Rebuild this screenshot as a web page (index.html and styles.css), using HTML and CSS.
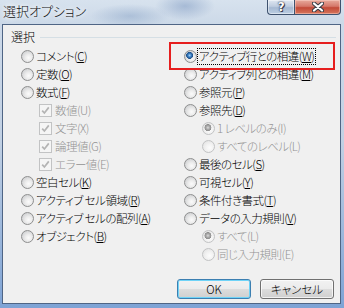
FILE: index.html
```html
<!DOCTYPE html>
<html lang="ja">
  <head>
    <meta charset="UTF-8" />
    <title>選択オプション</title>
    <link rel="stylesheet" href="styles.css">
  </head>
  <body>
    <div class="window">
      <!-- タイトルバー -->
      <div class="titlebar">
        <span class="title">選択オプション</span>
        <div class="caption">
          <span class="cap help">?</span>
          <span class="cap close">
            <svg width="12" height="10" viewBox="0 0 12 10">
              <path d="M2 1.5 L10 8.5 M10 1.5 L2 8.5" stroke="#3a3f48" stroke-width="4.2" stroke-linecap="round" fill="none"/>
              <path d="M2 1.5 L10 8.5 M10 1.5 L2 8.5" stroke="#fff" stroke-width="2.2" stroke-linecap="round" fill="none"/>
            </svg>
          </span>
        </div>
      </div>

      <div class="client">
        <div class="group">
          <div class="group-title"><span>選択</span></div>
          <div class="columns">
            <div class="col">
              <div class="row"><span class="radio"></span><span class="label">コメント(<u>C</u>)</span></div>
              <div class="row"><span class="radio"></span><span class="label">定数(<u>O</u>)</span></div>
              <div class="row"><span class="radio"></span><span class="label">数式(<u>F</u>)</span></div>
              <div class="row sub off"><span class="check"><svg width="11" height="11" viewBox="0 0 11 11"><path d="M2.2 5.6 L4.4 8 L8.8 2.4" stroke="#b4b4b4" stroke-width="1.7" fill="none"/></svg></span><span class="label">数値(U)</span></div>
              <div class="row sub off"><span class="check"><svg width="11" height="11" viewBox="0 0 11 11"><path d="M2.2 5.6 L4.4 8 L8.8 2.4" stroke="#b4b4b4" stroke-width="1.7" fill="none"/></svg></span><span class="label">文字(X)</span></div>
              <div class="row sub off"><span class="check"><svg width="11" height="11" viewBox="0 0 11 11"><path d="M2.2 5.6 L4.4 8 L8.8 2.4" stroke="#b4b4b4" stroke-width="1.7" fill="none"/></svg></span><span class="label">論理値(G)</span></div>
              <div class="row sub off"><span class="check"><svg width="11" height="11" viewBox="0 0 11 11"><path d="M2.2 5.6 L4.4 8 L8.8 2.4" stroke="#b4b4b4" stroke-width="1.7" fill="none"/></svg></span><span class="label">エラー値(E)</span></div>
              <div class="row"><span class="radio"></span><span class="label">空白セル(<u>K</u>)</span></div>
              <div class="row"><span class="radio"></span><span class="label">アクティブ セル領域(<u>R</u>)</span></div>
              <div class="row"><span class="radio"></span><span class="label">アクティブ セルの配列(<u>A</u>)</span></div>
              <div class="row"><span class="radio"></span><span class="label">オブジェクト(<u>B</u>)</span></div>
            </div>
            <div class="col">
              <div class="row marked"><span class="radio on"></span><span class="label focus">アクティブ行との相違(<u>W</u>)</span></div>
              <div class="row"><span class="radio"></span><span class="label">アクティブ列との相違(<u>M</u>)</span></div>
              <div class="row"><span class="radio"></span><span class="label">参照元(<u>P</u>)</span></div>
              <div class="row"><span class="radio"></span><span class="label">参照先(<u>D</u>)</span></div>
              <div class="row sub off"><span class="radio on"></span><span class="label">1 レベルのみ(I)</span></div>
              <div class="row sub off"><span class="radio"></span><span class="label">すべてのレベル(L)</span></div>
              <div class="row"><span class="radio"></span><span class="label">最後のセル(<u>S</u>)</span></div>
              <div class="row"><span class="radio"></span><span class="label">可視セル(<u>Y</u>)</span></div>
              <div class="row"><span class="radio"></span><span class="label">条件付き書式(<u>T</u>)</span></div>
              <div class="row"><span class="radio"></span><span class="label">データの入力規則(<u>V</u>)</span></div>
              <div class="row sub off"><span class="radio on"></span><span class="label">すべて(L)</span></div>
              <div class="row sub off"><span class="radio"></span><span class="label">同じ入力規則(E)</span></div>
            </div>
          </div>
        </div>

        <div class="actions">
          <button class="btn default">OK</button>
          <button class="btn">キャンセル</button>
        </div>
      </div>
    </div>
  </body>
</html>
```

FILE: styles.css
```css
* {
  box-sizing: border-box;
}

body {
  margin: 0;
  width: 344px;
  height: 308px;
  overflow: hidden;
  font-family: "Noto Sans CJK JP", sans-serif;
  font-size: 11.5px;
  font-weight: 300;
  letter-spacing: -0.5px;
  font-feature-settings: "palt";
  color: #000;
}

.window {
  display: flex;
  flex-direction: column;
  height: 308px;
  background: linear-gradient(to bottom, #cfdbea 0, #c2d1e4 45%, #7ea3d5 100%);
}

/* タイトルバー */
.titlebar {
  height: 24px;
  flex: none;
  display: flex;
  justify-content: space-between;
  align-items: flex-start;
  padding: 0 3px 0 3px;
  background:
    radial-gradient(ellipse 40px 12px at 130px 16px, rgba(120, 150, 190, 0.4), transparent),
    radial-gradient(ellipse 30px 14px at 185px 6px, rgba(110, 140, 185, 0.45), transparent),
    linear-gradient(to bottom, #d7e2ee, #ccd9e8);
}

.title {
  font-size: 13px;
  letter-spacing: 0;
  line-height: 17px;
  padding-top: 2px;
  color: #111;
  text-shadow: 0 0 4px #fff, 0 0 6px #fff;
}

.caption {
  display: flex;
}

.cap {
  height: 15px;
  display: flex;
  align-items: center;
  justify-content: center;
  border: 1px solid #3e526f;
  border-top: none;
}

.help {
  width: 27px;
  border-radius: 0 0 0 4px;
  border-right: none;
  color: #fff;
  font-family: "DejaVu Sans", sans-serif;
  font-weight: bold;
  font-size: 12px;
  line-height: 12px;
  text-shadow: 0 0 1px #223, 0 0 2px #334, 1px 1px 0 #445;
  background: linear-gradient(to bottom, #dfe7f1 0, #bfcde0 45%, #a6b9d2 55%, #bccee3 100%);
  box-shadow: inset 0 0 0 1px rgba(255, 255, 255, 0.45);
}

.close {
  width: 47px;
  border-radius: 0 0 4px 0;
  background: linear-gradient(to bottom, #e7aa9c 0, #d5786a 45%, #c24a38 55%, #d6765c 100%);
  box-shadow: inset 0 0 0 1px rgba(255, 220, 210, 0.45);
}

/* クライアント領域 */
.client {
  flex: 1;
  margin: 0 3px 4px 2px;
  border: 1px solid #4f6585;
  background: #f0f0f0;
  display: flex;
  flex-direction: column;
}

.group {
  margin: 5px 4px 0 5px;
  padding-bottom: 7px;
}

.group-title {
  display: flex;
  align-items: center;
  height: 14px;
  line-height: 14px;
  font-size: 12px;
  letter-spacing: 0;
  padding-left: 3px;
  margin-bottom: 3px;
}

.group-title::after {
  content: "";
  flex: 1;
  margin-left: 5px;
  border-top: 1px solid #d5dfe5;
}

.columns {
  display: grid;
  grid-template-columns: 163px 1fr;
  padding-left: 13px;
}

.col {
  display: flex;
  flex-direction: column;
}

.row {
  height: 18px;
  display: flex;
  align-items: center;
  white-space: nowrap;
}

.row.sub {
  padding-left: 18px;
}

.label {
  padding: 0 1px;
  line-height: 15px;
}

.off .label {
  color: #939393;
}

.focus {
  outline: 1px dotted #000;
}

.marked {
  position: relative;
}

.marked::after {
  content: "";
  position: absolute;
  left: -15px;
  top: -5px;
  width: 162px;
  height: 24px;
  border: 2px solid #e61e1e;
}

/* ラジオボタン */
.radio {
  flex: none;
  width: 13px;
  height: 13px;
  margin-right: 1px;
  border-radius: 50%;
  border: 1px solid #8e8f8f;
  background: radial-gradient(circle at 60% 62%, #fbfbfb 0, #ececec 35%, #cfd0d2 80%);
}

.radio.on {
  background:
    radial-gradient(circle at 42% 40%, #a8d4f8 0, #3f84c8 1.6px, #1d4f88 3.2px, transparent 3.7px),
    radial-gradient(circle at 60% 62%, #fbfbfb 0, #ececec 35%, #cfd0d2 80%);
}

.off .radio {
  border-color: #c2c3c4;
  background: radial-gradient(circle at 60% 62%, #fcfcfc 0, #f2f2f2 40%, #e3e3e3 85%);
}

.off .radio.on {
  background:
    radial-gradient(circle at 45% 42%, #dcdcdc 0, #a9a9a9 1.8px, #8e8e8e 3.2px, transparent 3.7px),
    radial-gradient(circle at 60% 62%, #fcfcfc 0, #f2f2f2 40%, #e3e3e3 85%);
}

/* チェックボックス */
.check {
  flex: none;
  width: 13px;
  height: 13px;
  margin-right: 2px;
  border: 1px solid #c2c3c4;
  background: #f5f5f5;
  display: flex;
}

/* ボタン */
.actions {
  display: flex;
  justify-content: flex-end;
  gap: 9px;
  margin-top: 9px;
  padding-right: 6px;
}

.btn {
  width: 74px;
  height: 20px;
  padding: 0;
  font: inherit;
  letter-spacing: 0;
  line-height: 18px;
  color: #000;
  border: 1px solid #707070;
  border-radius: 3px;
  background: linear-gradient(to bottom, #f2f2f2 0, #ebebeb 50%, #dddddd 50%, #cfcfcf 100%);
  box-shadow: inset 0 0 0 1px rgba(255, 255, 255, 0.7);
}

.btn.default {
  border-color: #3c7fb1;
  box-shadow: inset 0 0 0 1px #6fd3f7;
}
```
